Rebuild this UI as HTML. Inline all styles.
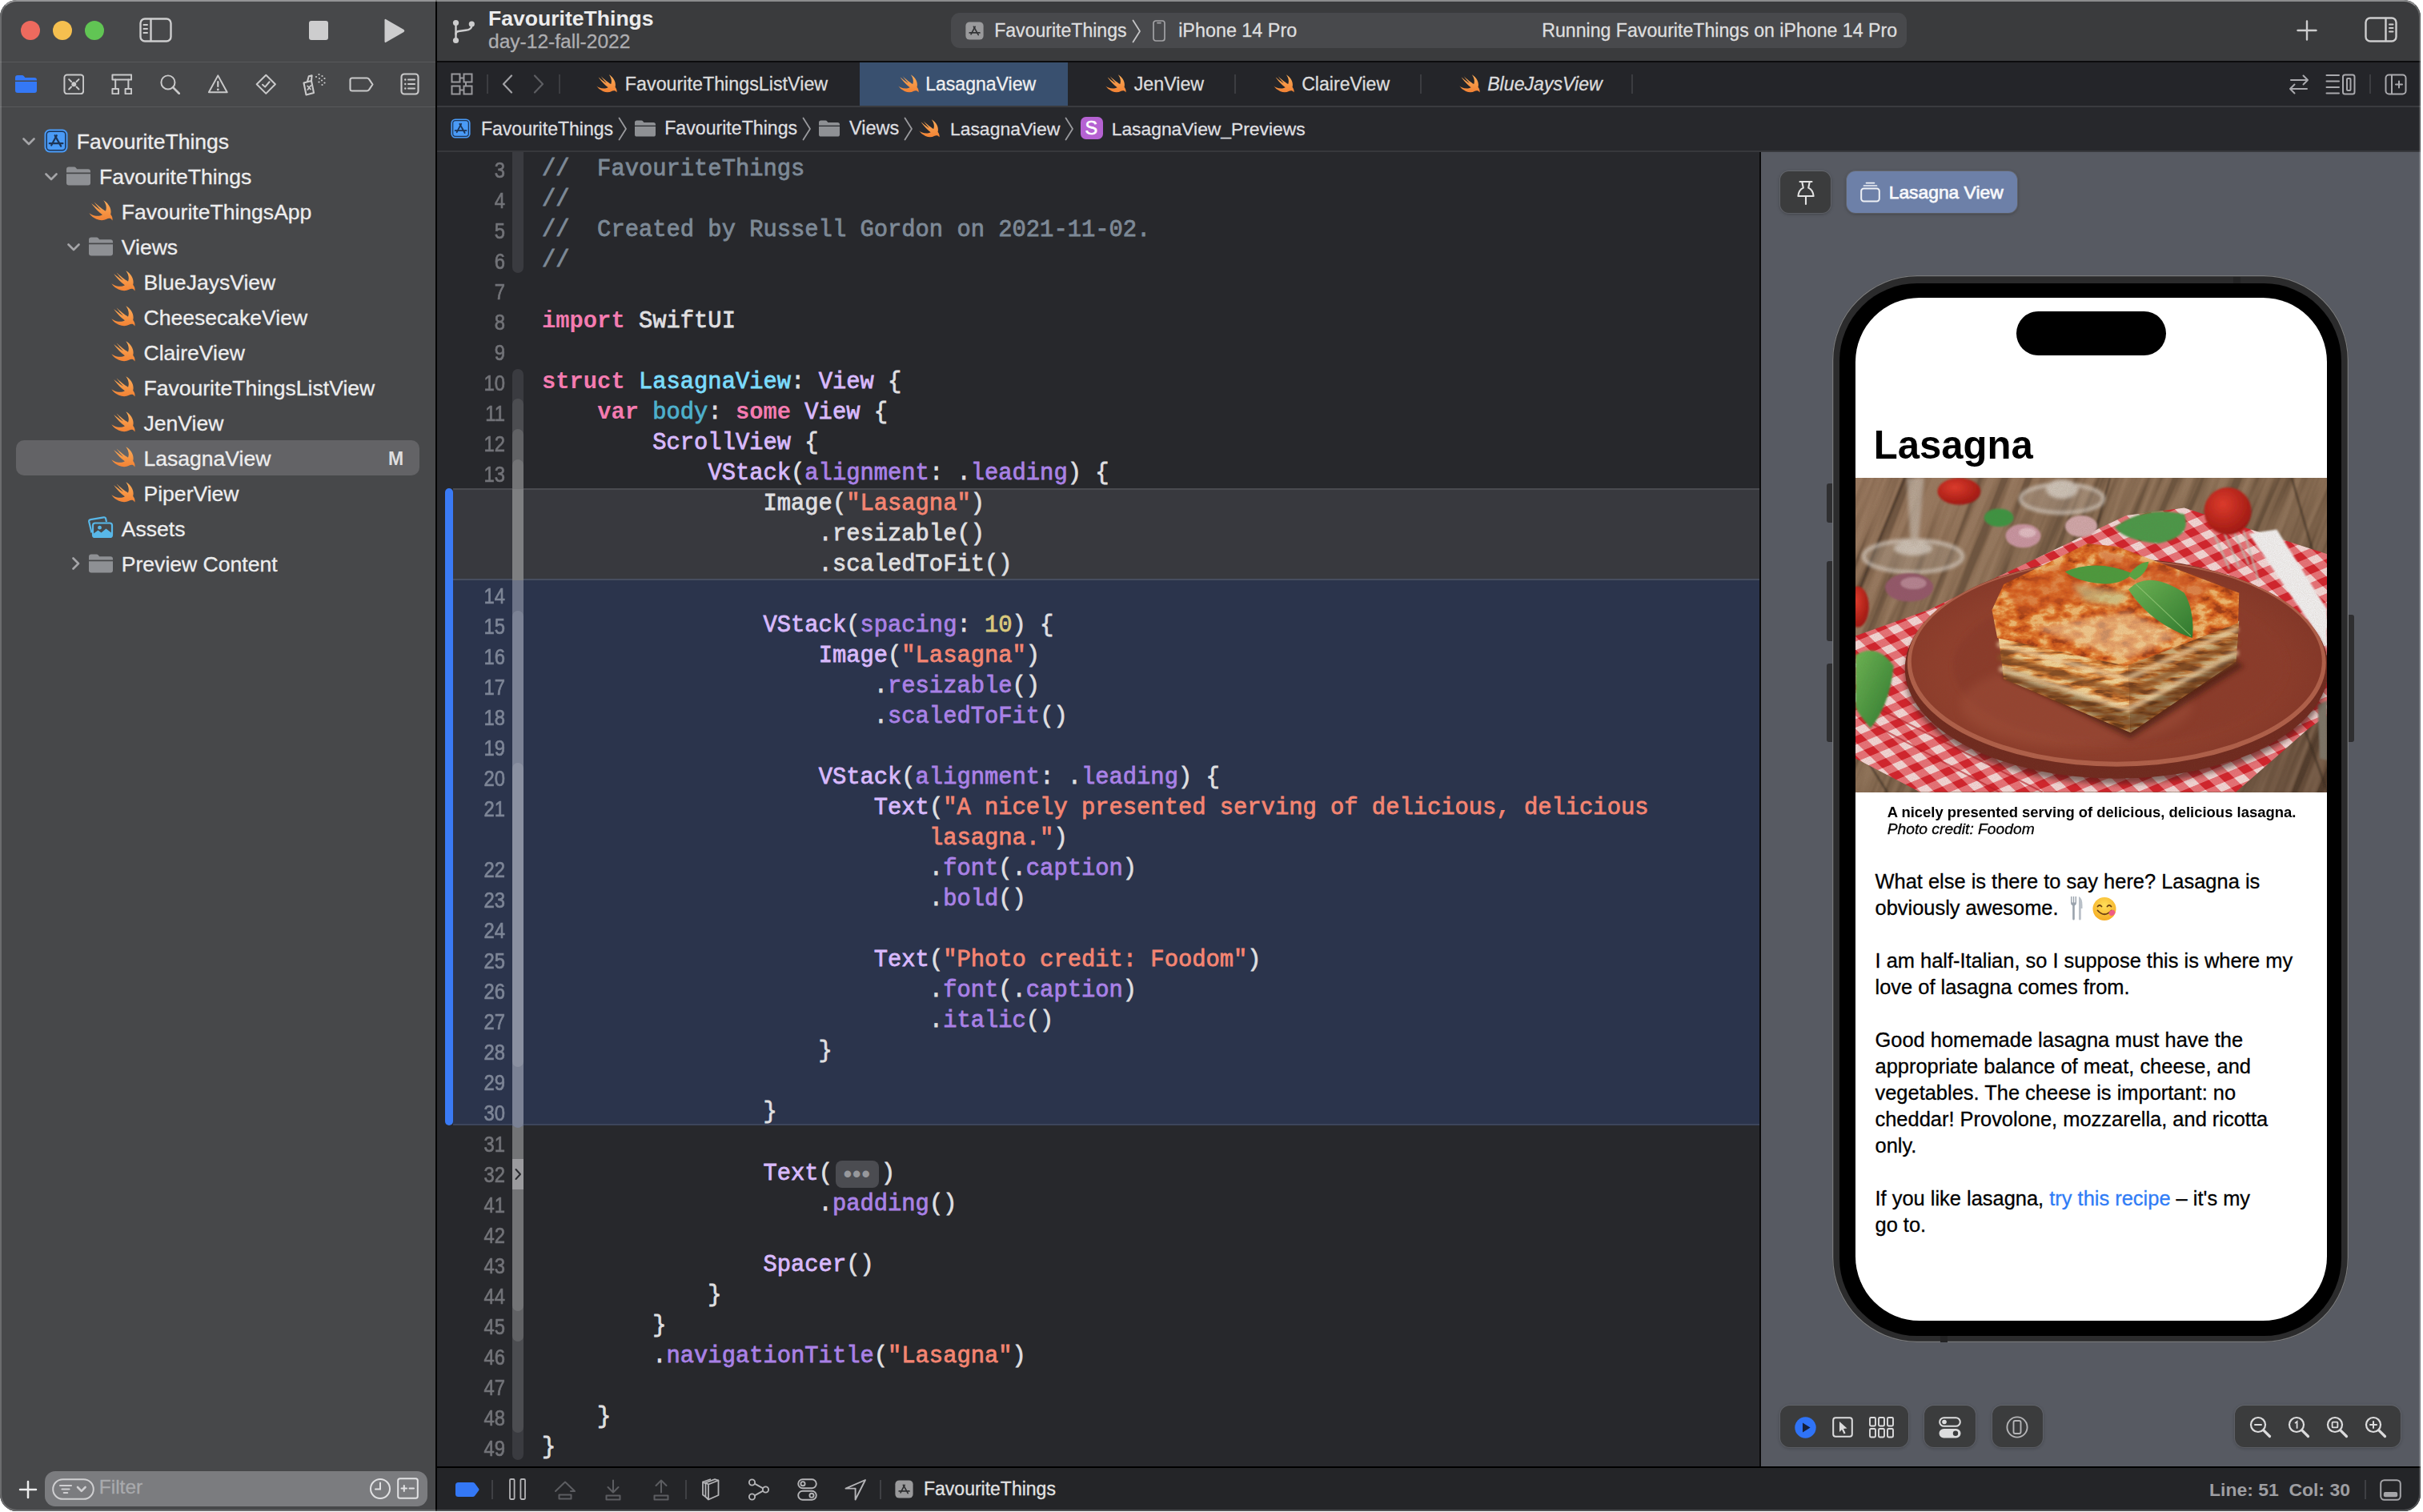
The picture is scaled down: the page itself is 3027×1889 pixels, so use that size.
<!DOCTYPE html>
<html lang="en"><head><meta charset="utf-8"><title>FavouriteThings — LasagnaView.swift</title>
<style>
*{box-sizing:border-box;margin:0;padding:0}
html,body{width:3027px;height:1889px;background:#fff;overflow:hidden}
body{position:relative;font-family:"Liberation Sans",sans-serif;color:#e4e4e5}
.abs{position:absolute}
.t{position:absolute;white-space:nowrap;line-height:1;-webkit-text-stroke:.3px currentColor}
#win{position:absolute;left:0;top:0;width:3024px;height:1888px;border-radius:21px;overflow:hidden;background:#27282c}
#frame{position:absolute;left:0;top:0;width:3024px;height:1888px;border-radius:21px;border:2px solid rgba(255,255,255,.2);border-top-color:rgba(255,255,255,.42);pointer-events:none}
.r{position:absolute}
.code{position:absolute;left:677px;white-space:pre;font-family:"Liberation Mono",monospace;font-size:28.8px;line-height:38px;height:38px;color:#dfdfe0;-webkit-text-stroke:.8px currentColor;letter-spacing:0}
.ln{position:absolute;left:446px;width:185px;text-align:right;font-size:27px;line-height:38px;height:38px;color:#727378;transform:scaleX(.88);transform-origin:100% 50%;-webkit-text-stroke:.7px currentColor}
.kw{color:#f47bb0;font-weight:700;-webkit-text-stroke:0}
.cm{color:#7d8996}
.st{color:#f48572}
.nu{color:#d9c97c}
.td{color:#7bdcfd}
.od{color:#4eb0cc}
.ty{color:#d8b9fc}
.fn{color:#a981e6}
.pill{display:inline-block;vertical-align:top;width:54px;height:34px;margin:2px 3.6px 0 3.6px;border-radius:8px;background:#4b4c51;color:#97989c;font-family:"Liberation Sans",sans-serif;font-size:31px;line-height:33px;text-align:center;letter-spacing:.5px;-webkit-text-stroke:0}
</style></head>
<body>
<svg width="0" height="0" style="position:absolute"><defs><linearGradient id="sg" x1="0" y1="0" x2="0" y2="1"><stop offset="0" stop-color="#fcae5a"/><stop offset="1" stop-color="#f28234"/></linearGradient></defs></svg>
<div id="win">
<div class="r" style="left:0px;top:0px;width:544px;height:1888px;background:#47484a;"></div>
<div class="r" style="left:0px;top:77px;width:544px;height:1px;background:#58595b;"></div>
<div class="r" style="left:0px;top:133px;width:544px;height:1px;background:#58595b;"></div>
<div class="r" style="left:544px;top:0px;width:2px;height:1888px;background:#000;"></div>
<div class="r" style="left:546px;top:0px;width:2478px;height:76px;background:#3a3b3d;"></div>
<div class="r" style="left:546px;top:76px;width:2478px;height:2px;background:#0c0c0d;"></div>
<div class="r" style="left:546px;top:78px;width:2478px;height:54px;background:#242529;"></div>
<div class="r" style="left:546px;top:132px;width:2478px;height:2px;background:#3a3b3f;"></div>
<div class="r" style="left:546px;top:134px;width:2478px;height:54px;background:#27282c;"></div>
<div class="r" style="left:546px;top:188px;width:2478px;height:2px;background:#37383c;"></div>
<div class="r" style="left:546px;top:190px;width:1652px;height:1642px;background:#27282c;"></div>
<div class="r" style="left:2198px;top:190px;width:2px;height:1642px;background:#0a0a0b;"></div>
<div class="r" style="left:2200px;top:190px;width:824px;height:1642px;background:#575a62;"></div>
<div class="r" style="left:546px;top:1832px;width:2478px;height:2px;background:#000;"></div>
<div class="r" style="left:546px;top:1834px;width:2478px;height:54px;background:#242528;"></div>
<div class="r" style="left:25.8px;top:25.7px;width:24.4px;height:24.4px;border-radius:50%;background:#ed6a5e"></div>
<div class="r" style="left:65.8px;top:25.7px;width:24.4px;height:24.4px;border-radius:50%;background:#f5bf4f"></div>
<div class="r" style="left:105.8px;top:25.7px;width:24.4px;height:24.4px;border-radius:50%;background:#61c554"></div>
<svg class="abs" style="left:174px;top:22px" width="41" height="31" viewBox="0 0 41 31" ><g fill="none" stroke="#cdcdce" stroke-width="2.4" stroke-linecap="round"><rect x="1.5" y="1.5" width="38" height="28" rx="5.5"/><path d="M14.5 2V29"/><path d="M5.5 9H10M5.5 14H10M5.5 19H10" stroke-width="2"/></g></svg>
<div class="r" style="left:386px;top:26px;width:24px;height:24px;border-radius:3px;background:#cdcdce"></div>
<svg class="abs" style="left:478px;top:22px" width="30" height="33" viewBox="0 0 30 33" ><path d="M2.5 3.2Q2.5 1.2 4.3 2.2L26.5 15Q28.2 16.5 26.5 18L4.3 30.8Q2.5 31.8 2.5 29.8Z" fill="#cdcdce"/></svg>
<svg class="abs" style="left:563px;top:23px" width="33" height="33" viewBox="0 0 33 33" ><g fill="none" stroke="#cdcdce" stroke-width="2.4" stroke-linecap="round"><path d="M6.5 8V25"/><path d="M6.5 19.5Q6.5 16.5 10 16L19 14.8Q26 14 26.2 9.5"/></g><g fill="#cdcdce"><circle cx="6.5" cy="5.5" r="3.6"/><circle cx="6.5" cy="27.5" r="3.6"/><circle cx="26.3" cy="7" r="3.6"/></g></svg>
<div class="t " style="left:610.0px;top:9.8px;font-size:26.57px;font-weight:700;font-style:normal;color:#ececed;-webkit-text-stroke:0;">FavouriteThings</div>
<div class="t " style="left:610.0px;top:40.0px;font-size:24.55px;font-weight:400;font-style:normal;color:#aeaeb1;">day-12-fall-2022</div>
<div class="r" style="left:1188px;top:16px;width:1194px;height:44px;border-radius:11px;background:#48494c"></div>
<svg class="abs" style="left:1206px;top:27px" width="23" height="23" viewBox="0 0 30 30" ><rect x="0.5" y="0.5" width="29" height="29" rx="6.5" fill="#9a9a9c"/><g stroke="#333436" stroke-width="2.2" stroke-linecap="round" fill="none"><path d="M15.8 8.2L9.2 20.6"/><path d="M13.6 8.2L21.2 21.6"/><path d="M6.8 18.2H18.6"/><path d="M20.6 18.2H23.4"/></g></svg>
<div class="t " style="left:1242.2px;top:26.8px;font-size:23.07px;font-weight:400;font-style:normal;color:#dededf;">FavouriteThings</div>
<svg class="abs" style="left:1414px;top:24px" width="12" height="30" viewBox="0 0 12 30" ><path d="M1.5 1.5L10 15L1.5 28.5" fill="none" stroke="#c4c4c6" stroke-width="1.8" stroke-linecap="round" stroke-linejoin="round"/></svg>
<svg class="abs" style="left:1440px;top:25px" width="16" height="27" viewBox="0 0 16 27" ><g fill="none" stroke="#a2a2a5" stroke-width="1.7"><rect x="1" y="1" width="14" height="25" rx="3"/><path d="M6 3.6H10" stroke-linecap="round"/></g></svg>
<div class="t " style="left:1472.2px;top:26.5px;font-size:23.35px;font-weight:400;font-style:normal;color:#dededf;">iPhone 14 Pro</div>
<div class="t " style="left:1926.2px;top:26.7px;font-size:23.15px;font-weight:400;font-style:normal;color:#dededf;">Running FavouriteThings on iPhone 14 Pro</div>
<svg class="abs" style="left:2869px;top:25px" width="26" height="26" viewBox="0 0 26 26" ><path d="M13 1.5V24.5M1.5 13H24.5" stroke="#cdcdce" stroke-width="2.4" stroke-linecap="round"/></svg>
<svg class="abs" style="left:2954px;top:21px" width="41" height="32" viewBox="0 0 41 32" ><g fill="none" stroke="#cdcdce" stroke-width="2.4" stroke-linecap="round"><rect x="1.5" y="1.5" width="38" height="29" rx="5.5"/><path d="M26.5 2V30"/><path d="M31 9.5H35.5M31 14H35.5M31 18.5H35.5" stroke-width="2"/></g></svg>
<svg class="abs" style="left:563px;top:91px" width="28" height="28" viewBox="0 0 28 28" ><g fill="none" stroke="#98989c" stroke-width="2"><rect x="1.5" y="1.5" width="10" height="10"/><rect x="16.5" y="1.5" width="10" height="10"/><rect x="1.5" y="16.5" width="10" height="10"/><rect x="16.5" y="16.5" width="10" height="10"/><path d="M11.5 6.5H16.5M11.5 21.5H16.5M19 11.5V16.5"/></g></svg>
<div class="r" style="left:608px;top:93px;width:2px;height:24px;background:#3c3d41"></div>
<svg class="abs" style="left:627px;top:93px" width="14" height="24" viewBox="0 0 14 24" ><path d="M12 1.5L2 12L12 22.5" fill="none" stroke="#a2a2a6" stroke-width="2.2" stroke-linecap="round" stroke-linejoin="round"/></svg>
<svg class="abs" style="left:666px;top:93px" width="14" height="24" viewBox="0 0 14 24" ><path d="M2 1.5L12 12L2 22.5" fill="none" stroke="#5d5e62" stroke-width="2.2" stroke-linecap="round" stroke-linejoin="round"/></svg>
<div class="r" style="left:698px;top:93px;width:2px;height:24px;background:#3c3d41"></div>
<div class="r" style="left:1074px;top:78px;width:260px;height:54px;background:#39506f"></div>
<svg class="abs" style="left:745px;top:93px" width="26" height="23" viewBox="2.2 3.2 18.6 16.9" preserveAspectRatio="none"><path d="M13.543 3.41c4.114 2.47 6.545 7.162 5.549 11.131-.024.093-.05.181-.076.272l.002.001c2.062 2.538 1.5 5.258 1.236 4.745-1.072-2.086-3.066-1.568-4.088-1.043a6.803 6.803 0 0 1-.281.158l-.02.012-.002.002c-2.115 1.123-4.957 1.205-7.812-.022a12.568 12.568 0 0 1-5.64-4.838c.649.48 1.35.902 2.097 1.252 3.019 1.414 6.051 1.311 8.197-.002C9.651 12.73 7.101 9.67 5.146 7.191a10.628 10.628 0 0 1-1.005-1.384c2.34 2.142 6.038 4.83 7.365 5.576C8.69 8.408 6.208 4.743 6.324 4.86c4.436 4.47 8.528 6.996 8.528 6.996.154.085.27.154.36.213.085-.215.16-.437.224-.668.708-2.588-.09-5.548-1.893-7.992z" fill="url(#sg)"/></svg>
<div class="t " style="left:780.8px;top:94.2px;font-size:23.3px;font-weight:400;font-style:normal;color:#dcdcdd;">FavouriteThingsListView</div>
<svg class="abs" style="left:1122px;top:93px" width="26" height="23" viewBox="2.2 3.2 18.6 16.9" preserveAspectRatio="none"><path d="M13.543 3.41c4.114 2.47 6.545 7.162 5.549 11.131-.024.093-.05.181-.076.272l.002.001c2.062 2.538 1.5 5.258 1.236 4.745-1.072-2.086-3.066-1.568-4.088-1.043a6.803 6.803 0 0 1-.281.158l-.02.012-.002.002c-2.115 1.123-4.957 1.205-7.812-.022a12.568 12.568 0 0 1-5.64-4.838c.649.48 1.35.902 2.097 1.252 3.019 1.414 6.051 1.311 8.197-.002C9.651 12.73 7.101 9.67 5.146 7.191a10.628 10.628 0 0 1-1.005-1.384c2.34 2.142 6.038 4.83 7.365 5.576C8.69 8.408 6.208 4.743 6.324 4.86c4.436 4.47 8.528 6.996 8.528 6.996.154.085.27.154.36.213.085-.215.16-.437.224-.668.708-2.588-.09-5.548-1.893-7.992z" fill="url(#sg)"/></svg>
<div class="t " style="left:1156.2px;top:94.4px;font-size:23.05px;font-weight:400;font-style:normal;color:#f0f0f1;">LasagnaView</div>
<svg class="abs" style="left:1381px;top:93px" width="26" height="23" viewBox="2.2 3.2 18.6 16.9" preserveAspectRatio="none"><path d="M13.543 3.41c4.114 2.47 6.545 7.162 5.549 11.131-.024.093-.05.181-.076.272l.002.001c2.062 2.538 1.5 5.258 1.236 4.745-1.072-2.086-3.066-1.568-4.088-1.043a6.803 6.803 0 0 1-.281.158l-.02.012-.002.002c-2.115 1.123-4.957 1.205-7.812-.022a12.568 12.568 0 0 1-5.64-4.838c.649.48 1.35.902 2.097 1.252 3.019 1.414 6.051 1.311 8.197-.002C9.651 12.73 7.101 9.67 5.146 7.191a10.628 10.628 0 0 1-1.005-1.384c2.34 2.142 6.038 4.83 7.365 5.576C8.69 8.408 6.208 4.743 6.324 4.86c4.436 4.47 8.528 6.996 8.528 6.996.154.085.27.154.36.213.085-.215.16-.437.224-.668.708-2.588-.09-5.548-1.893-7.992z" fill="url(#sg)"/></svg>
<div class="t " style="left:1416.7px;top:94.2px;font-size:23.26px;font-weight:400;font-style:normal;color:#dcdcdd;">JenView</div>
<div class="r" style="left:1542px;top:93px;width:2px;height:24px;background:#3c3d41"></div>
<svg class="abs" style="left:1591px;top:93px" width="26" height="23" viewBox="2.2 3.2 18.6 16.9" preserveAspectRatio="none"><path d="M13.543 3.41c4.114 2.47 6.545 7.162 5.549 11.131-.024.093-.05.181-.076.272l.002.001c2.062 2.538 1.5 5.258 1.236 4.745-1.072-2.086-3.066-1.568-4.088-1.043a6.803 6.803 0 0 1-.281.158l-.02.012-.002.002c-2.115 1.123-4.957 1.205-7.812-.022a12.568 12.568 0 0 1-5.64-4.838c.649.48 1.35.902 2.097 1.252 3.019 1.414 6.051 1.311 8.197-.002C9.651 12.73 7.101 9.67 5.146 7.191a10.628 10.628 0 0 1-1.005-1.384c2.34 2.142 6.038 4.83 7.365 5.576C8.69 8.408 6.208 4.743 6.324 4.86c4.436 4.47 8.528 6.996 8.528 6.996.154.085.27.154.36.213.085-.215.16-.437.224-.668.708-2.588-.09-5.548-1.893-7.992z" fill="url(#sg)"/></svg>
<div class="t " style="left:1626.2px;top:94.3px;font-size:23.1px;font-weight:400;font-style:normal;color:#dcdcdd;">ClaireView</div>
<div class="r" style="left:1774px;top:93px;width:2px;height:24px;background:#3c3d41"></div>
<svg class="abs" style="left:1823px;top:93px" width="26" height="23" viewBox="2.2 3.2 18.6 16.9" preserveAspectRatio="none"><path d="M13.543 3.41c4.114 2.47 6.545 7.162 5.549 11.131-.024.093-.05.181-.076.272l.002.001c2.062 2.538 1.5 5.258 1.236 4.745-1.072-2.086-3.066-1.568-4.088-1.043a6.803 6.803 0 0 1-.281.158l-.02.012-.002.002c-2.115 1.123-4.957 1.205-7.812-.022a12.568 12.568 0 0 1-5.64-4.838c.649.48 1.35.902 2.097 1.252 3.019 1.414 6.051 1.311 8.197-.002C9.651 12.73 7.101 9.67 5.146 7.191a10.628 10.628 0 0 1-1.005-1.384c2.34 2.142 6.038 4.83 7.365 5.576C8.69 8.408 6.208 4.743 6.324 4.86c4.436 4.47 8.528 6.996 8.528 6.996.154.085.27.154.36.213.085-.215.16-.437.224-.668.708-2.588-.09-5.548-1.893-7.992z" fill="url(#sg)"/></svg>
<div class="t " style="left:1858.2px;top:94.3px;font-size:23.15px;font-weight:400;font-style:italic;color:#dcdcdd;">BlueJaysView</div>
<div class="r" style="left:2038px;top:93px;width:2px;height:24px;background:#3c3d41"></div>
<svg class="abs" style="left:2858px;top:92px" width="28" height="27" viewBox="0 0 28 27" ><g fill="none" stroke="#a9a9ad" stroke-width="2" stroke-linecap="round" stroke-linejoin="round"><path d="M4 8H25M19.5 2.5L25 8L19.5 13.5"/><path d="M24 19H3M8.5 13.5L3 19L8.5 24.5"/></g></svg>
<svg class="abs" style="left:2905px;top:92px" width="38" height="27" viewBox="0 0 38 27" ><g fill="none" stroke="#a9a9ad" stroke-width="2" stroke-linecap="round"><path d="M1.5 2H17M1.5 9.5H17M1.5 17H17M1.5 24.5H17"/><rect x="22" y="1.5" width="14.5" height="24" rx="2.5"/><rect x="27" y="6" width="4.5" height="15" rx="1"/></g></svg>
<div class="r" style="left:2960px;top:93px;width:2px;height:24px;background:#3c3d41"></div>
<svg class="abs" style="left:2979px;top:92px" width="28" height="27" viewBox="0 0 28 27" ><g fill="none" stroke="#a9a9ad" stroke-width="2" stroke-linecap="round"><rect x="1.5" y="1.5" width="25" height="24" rx="4"/><path d="M9 2V25"/><path d="M14 13.5H22M18 9.5V17.5"/></g></svg>
<svg class="abs" style="left:563px;top:148px" width="25" height="25" viewBox="0 0 30 30" ><rect x="0.5" y="0.5" width="29" height="29" rx="6.5" fill="#4a9bf7"/><rect x="3.2" y="3.2" width="23.6" height="23.6" rx="4" fill="none" stroke="#1d3557" stroke-width="1.5"/><g stroke="#1d3557" stroke-width="2.2" stroke-linecap="round" fill="none"><path d="M15.8 8.2L9.2 20.6"/><path d="M13.6 8.2L21.2 21.6"/><path d="M6.8 18.2H18.6"/><path d="M20.6 18.2H23.4"/></g></svg>
<div class="t " style="left:600.9px;top:149.5px;font-size:23.05px;font-weight:400;font-style:normal;color:#dfdfe0;">FavouriteThings</div>
<svg class="abs" style="left:772px;top:146px" width="12" height="30" viewBox="0 0 12 30" ><path d="M1.5 1.5L10 15L1.5 28.5" fill="none" stroke="#9a9a9e" stroke-width="1.8" stroke-linecap="round" stroke-linejoin="round"/></svg>
<svg class="abs" style="left:793px;top:150px" width="26" height="21" viewBox="0 0 30 24" ><path d="M0 3.6Q0 .6 3 .6H9.6Q11 .6 12 1.8L13.2 3.3H27Q30 3.3 30 6.3V7.6H0Z" fill="#8e9094"/><path d="M0 9.2H30V20.6Q30 23.6 27 23.6H3Q0 23.6 0 20.6Z" fill="#8e9094"/></svg>
<div class="t " style="left:830.2px;top:149.4px;font-size:23.15px;font-weight:400;font-style:normal;color:#dfdfe0;">FavouriteThings</div>
<svg class="abs" style="left:1002px;top:146px" width="12" height="30" viewBox="0 0 12 30" ><path d="M1.5 1.5L10 15L1.5 28.5" fill="none" stroke="#9a9a9e" stroke-width="1.8" stroke-linecap="round" stroke-linejoin="round"/></svg>
<svg class="abs" style="left:1023px;top:150px" width="26" height="21" viewBox="0 0 30 24" ><path d="M0 3.6Q0 .6 3 .6H9.6Q11 .6 12 1.8L13.2 3.3H27Q30 3.3 30 6.3V7.6H0Z" fill="#8e9094"/><path d="M0 9.2H30V20.6Q30 23.6 27 23.6H3Q0 23.6 0 20.6Z" fill="#8e9094"/></svg>
<div class="t " style="left:1061.0px;top:149.1px;font-size:23.48px;font-weight:400;font-style:normal;color:#dfdfe0;">Views</div>
<svg class="abs" style="left:1129px;top:146px" width="12" height="30" viewBox="0 0 12 30" ><path d="M1.5 1.5L10 15L1.5 28.5" fill="none" stroke="#9a9a9e" stroke-width="1.8" stroke-linecap="round" stroke-linejoin="round"/></svg>
<svg class="abs" style="left:1148px;top:149px" width="26" height="23" viewBox="2.2 3.2 18.6 16.9" preserveAspectRatio="none"><path d="M13.543 3.41c4.114 2.47 6.545 7.162 5.549 11.131-.024.093-.05.181-.076.272l.002.001c2.062 2.538 1.5 5.258 1.236 4.745-1.072-2.086-3.066-1.568-4.088-1.043a6.803 6.803 0 0 1-.281.158l-.02.012-.002.002c-2.115 1.123-4.957 1.205-7.812-.022a12.568 12.568 0 0 1-5.64-4.838c.649.48 1.35.902 2.097 1.252 3.019 1.414 6.051 1.311 8.197-.002C9.651 12.73 7.101 9.67 5.146 7.191a10.628 10.628 0 0 1-1.005-1.384c2.34 2.142 6.038 4.83 7.365 5.576C8.69 8.408 6.208 4.743 6.324 4.86c4.436 4.47 8.528 6.996 8.528 6.996.154.085.27.154.36.213.085-.215.16-.437.224-.668.708-2.588-.09-5.548-1.893-7.992z" fill="url(#sg)"/></svg>
<div class="t " style="left:1186.9px;top:149.6px;font-size:22.94px;font-weight:400;font-style:normal;color:#dfdfe0;">LasagnaView</div>
<svg class="abs" style="left:1330px;top:146px" width="12" height="30" viewBox="0 0 12 30" ><path d="M1.5 1.5L10 15L1.5 28.5" fill="none" stroke="#9a9a9e" stroke-width="1.8" stroke-linecap="round" stroke-linejoin="round"/></svg>
<div class="r" style="left:1350px;top:146px;width:28px;height:28px;border-radius:6.5px;background:#b562d2"></div>
<div class="t " style="left:1355.5px;top:148.7px;font-size:23.5px;font-weight:400;font-style:normal;color:#fff;-webkit-text-stroke:.6px #fff;">S</div>
<div class="t " style="left:1388.7px;top:149.7px;font-size:22.84px;font-weight:400;font-style:normal;color:#dfdfe0;">LasagnaView_Previews</div>
<svg class="abs" style="left:19px;top:94px" width="27" height="22" viewBox="0 0 27 22" ><path d="M0 3Q0 0 3 0H8.5Q10 0 11 1.2L12.4 3H24Q27 3 27 6V6.6H0Z" fill="#3478f6"/><path d="M0 8H27V19Q27 22 24 22H3Q0 22 0 19Z" fill="#3478f6"/></svg>
<svg class="abs" style="left:78.7px;top:91.7px" width="26.6" height="26.6" viewBox="0 0 28 28" ><g fill="none" stroke="#c9c9ca" stroke-width="2.1" stroke-linecap="round" stroke-linejoin="round"><rect x="1.5" y="1.5" width="25" height="25" rx="3.5"/><path d="M7.5 7.5L10.6 10.6M20.5 7.5L17.4 10.6M7.5 20.5L10.6 17.4M20.5 20.5L17.4 17.4"/></g><circle cx="14" cy="14" r="3.1" fill="#c9c9ca"/></svg>
<svg class="abs" style="left:138.7px;top:91.7px" width="26.6" height="26.6" viewBox="0 0 28 28" ><g fill="none" stroke="#c9c9ca" stroke-width="2.1" stroke-linecap="round" stroke-linejoin="round"><rect x="1.5" y="1.5" width="25" height="6.5"/><rect x="1.5" y="20" width="8" height="6.5"/><rect x="18.5" y="20" width="8" height="6.5"/><path d="M5.5 8V20M22.5 8V20"/></g></svg>
<svg class="abs" style="left:198.7px;top:91.7px" width="26.6" height="26.6" viewBox="0 0 28 28" ><g fill="none" stroke="#c9c9ca" stroke-width="2.1" stroke-linecap="round" stroke-linejoin="round"><circle cx="11.5" cy="11.5" r="9"/><path d="M18 18L26 26" stroke-width="2.8"/></g></svg>
<svg class="abs" style="left:258.7px;top:91.7px" width="26.6" height="26.6" viewBox="0 0 28 28" ><g fill="none" stroke="#c9c9ca" stroke-width="2.1" stroke-linecap="round" stroke-linejoin="round"><path d="M14 2.5L26 24.5H2Z"/></g><rect x="12.8" y="9.5" width="2.4" height="8.5" rx="1.2" fill="#c9c9ca"/><circle cx="14" cy="21" r="1.5" fill="#c9c9ca"/></svg>
<svg class="abs" style="left:318.7px;top:91.7px" width="26.6" height="26.6" viewBox="0 0 28 28" ><g fill="none" stroke="#c9c9ca" stroke-width="2.1" stroke-linecap="round" stroke-linejoin="round"><path d="M14 1.8L26.2 14L14 26.2L1.8 14Z" /><path d="M9.5 14.5L12.8 17.5L18.5 10.8"/></g></svg>
<svg class="abs" style="left:376px;top:90px" width="32" height="30" viewBox="0 0 32 30" ><g fill="none" stroke="#c9c9ca" stroke-width="2.1" stroke-linecap="round" stroke-linejoin="round"><path d="M3.5 13.5L13 11L16 26L6.5 28.5Z"/><path d="M8 12L9.8 5.2L13.6 4.2L13 10.8"/><path d="M8.2 17.5L12 21.5M12.2 17L8.4 22" stroke-width="1.8"/></g><g fill="#c9c9ca"><circle cx="19" cy="6" r="1.1"/><circle cx="22.5" cy="3" r="1.1"/><circle cx="23" cy="8" r="1.1"/><circle cx="26.5" cy="5" r="1.1"/><circle cx="26" cy="10.5" r="1.1"/><circle cx="29.5" cy="8" r="1.1"/><circle cx="29.5" cy="13.5" r="1.1"/><circle cx="26.5" cy="16" r="1.1"/><circle cx="22.5" cy="12.5" r="1.1"/></g></svg>
<svg class="abs" style="left:436px;top:96px" width="31" height="19" viewBox="0 0 31 19" ><g fill="none" stroke="#c9c9ca" stroke-width="2.1" stroke-linecap="round" stroke-linejoin="round"><path d="M4 1.5H22.5Q24 1.5 25 2.8L29.5 9.5L25 16.2Q24 17.5 22.5 17.5H4Q1.5 17.5 1.5 15V4Q1.5 1.5 4 1.5Z"/></g></svg>
<svg class="abs" style="left:500px;top:91px" width="24" height="28" viewBox="0 0 24 28" ><g fill="none" stroke="#c9c9ca" stroke-width="2.1" stroke-linecap="round" stroke-linejoin="round"><rect x="1.5" y="1.5" width="21" height="25" rx="3.5"/><path d="M10 8.5H18M10 14H18M10 19.5H18"/></g><g fill="#c9c9ca"><circle cx="6.3" cy="8.5" r="1.2"/><circle cx="6.3" cy="14" r="1.2"/><circle cx="6.3" cy="19.5" r="1.2"/></g></svg>
<div class="r" style="left:20px;top:550px;width:504px;height:44px;border-radius:10px;background:#636366"></div>
<svg class="abs" style="left:28px;top:172px" width="16" height="10" viewBox="0 0 16 10" ><path d="M1.5 1.5L8 8L14.5 1.5" fill="none" stroke="#a5a5a8" stroke-width="2.6" stroke-linecap="round" stroke-linejoin="round"/></svg>
<svg class="abs" style="left:55px;top:161px" width="30" height="30" viewBox="0 0 30 30" ><rect x="0.5" y="0.5" width="29" height="29" rx="6.5" fill="#4a9bf7"/><rect x="3.2" y="3.2" width="23.6" height="23.6" rx="4" fill="none" stroke="#1d3557" stroke-width="1.5"/><g stroke="#1d3557" stroke-width="2.2" stroke-linecap="round" fill="none"><path d="M15.8 8.2L9.2 20.6"/><path d="M13.6 8.2L21.2 21.6"/><path d="M6.8 18.2H18.6"/><path d="M20.6 18.2H23.4"/></g></svg>
<div class="t " style="left:95.8px;top:163.5px;font-size:26.56px;font-weight:400;font-style:normal;color:#ededee;">FavouriteThings</div>
<svg class="abs" style="left:56px;top:216px" width="16" height="10" viewBox="0 0 16 10" ><path d="M1.5 1.5L8 8L14.5 1.5" fill="none" stroke="#a5a5a8" stroke-width="2.6" stroke-linecap="round" stroke-linejoin="round"/></svg>
<svg class="abs" style="left:83px;top:208px" width="30" height="24" viewBox="0 0 30 24" ><path d="M0 3.6Q0 .6 3 .6H9.6Q11 .6 12 1.8L13.2 3.3H27Q30 3.3 30 6.3V7.6H0Z" fill="#8e9094"/><path d="M0 9.2H30V20.6Q30 23.6 27 23.6H3Q0 23.6 0 20.6Z" fill="#8e9094"/></svg>
<div class="t " style="left:124.0px;top:207.5px;font-size:26.56px;font-weight:400;font-style:normal;color:#ededee;">FavouriteThings</div>
<svg class="abs" style="left:111px;top:250px" width="30" height="26" viewBox="2.2 3.2 18.6 16.9" preserveAspectRatio="none"><path d="M13.543 3.41c4.114 2.47 6.545 7.162 5.549 11.131-.024.093-.05.181-.076.272l.002.001c2.062 2.538 1.5 5.258 1.236 4.745-1.072-2.086-3.066-1.568-4.088-1.043a6.803 6.803 0 0 1-.281.158l-.02.012-.002.002c-2.115 1.123-4.957 1.205-7.812-.022a12.568 12.568 0 0 1-5.64-4.838c.649.48 1.35.902 2.097 1.252 3.019 1.414 6.051 1.311 8.197-.002C9.651 12.73 7.101 9.67 5.146 7.191a10.628 10.628 0 0 1-1.005-1.384c2.34 2.142 6.038 4.83 7.365 5.576C8.69 8.408 6.208 4.743 6.324 4.86c4.436 4.47 8.528 6.996 8.528 6.996.154.085.27.154.36.213.085-.215.16-.437.224-.668.708-2.588-.09-5.548-1.893-7.992z" fill="url(#sg)"/></svg>
<div class="t " style="left:151.8px;top:251.5px;font-size:26.56px;font-weight:400;font-style:normal;color:#ededee;">FavouriteThingsApp</div>
<svg class="abs" style="left:84px;top:304px" width="16" height="10" viewBox="0 0 16 10" ><path d="M1.5 1.5L8 8L14.5 1.5" fill="none" stroke="#a5a5a8" stroke-width="2.6" stroke-linecap="round" stroke-linejoin="round"/></svg>
<svg class="abs" style="left:111px;top:296px" width="30" height="24" viewBox="0 0 30 24" ><path d="M0 3.6Q0 .6 3 .6H9.6Q11 .6 12 1.8L13.2 3.3H27Q30 3.3 30 6.3V7.6H0Z" fill="#8e9094"/><path d="M0 9.2H30V20.6Q30 23.6 27 23.6H3Q0 23.6 0 20.6Z" fill="#8e9094"/></svg>
<div class="t " style="left:151.8px;top:295.5px;font-size:26.56px;font-weight:400;font-style:normal;color:#ededee;">Views</div>
<svg class="abs" style="left:139px;top:338px" width="30" height="26" viewBox="2.2 3.2 18.6 16.9" preserveAspectRatio="none"><path d="M13.543 3.41c4.114 2.47 6.545 7.162 5.549 11.131-.024.093-.05.181-.076.272l.002.001c2.062 2.538 1.5 5.258 1.236 4.745-1.072-2.086-3.066-1.568-4.088-1.043a6.803 6.803 0 0 1-.281.158l-.02.012-.002.002c-2.115 1.123-4.957 1.205-7.812-.022a12.568 12.568 0 0 1-5.64-4.838c.649.48 1.35.902 2.097 1.252 3.019 1.414 6.051 1.311 8.197-.002C9.651 12.73 7.101 9.67 5.146 7.191a10.628 10.628 0 0 1-1.005-1.384c2.34 2.142 6.038 4.83 7.365 5.576C8.69 8.408 6.208 4.743 6.324 4.86c4.436 4.47 8.528 6.996 8.528 6.996.154.085.27.154.36.213.085-.215.16-.437.224-.668.708-2.588-.09-5.548-1.893-7.992z" fill="url(#sg)"/></svg>
<div class="t " style="left:179.5px;top:339.5px;font-size:26.56px;font-weight:400;font-style:normal;color:#ededee;">BlueJaysView</div>
<svg class="abs" style="left:139px;top:382px" width="30" height="26" viewBox="2.2 3.2 18.6 16.9" preserveAspectRatio="none"><path d="M13.543 3.41c4.114 2.47 6.545 7.162 5.549 11.131-.024.093-.05.181-.076.272l.002.001c2.062 2.538 1.5 5.258 1.236 4.745-1.072-2.086-3.066-1.568-4.088-1.043a6.803 6.803 0 0 1-.281.158l-.02.012-.002.002c-2.115 1.123-4.957 1.205-7.812-.022a12.568 12.568 0 0 1-5.64-4.838c.649.48 1.35.902 2.097 1.252 3.019 1.414 6.051 1.311 8.197-.002C9.651 12.73 7.101 9.67 5.146 7.191a10.628 10.628 0 0 1-1.005-1.384c2.34 2.142 6.038 4.83 7.365 5.576C8.69 8.408 6.208 4.743 6.324 4.86c4.436 4.47 8.528 6.996 8.528 6.996.154.085.27.154.36.213.085-.215.16-.437.224-.668.708-2.588-.09-5.548-1.893-7.992z" fill="url(#sg)"/></svg>
<div class="t " style="left:179.5px;top:383.5px;font-size:26.56px;font-weight:400;font-style:normal;color:#ededee;">CheesecakeView</div>
<svg class="abs" style="left:139px;top:426px" width="30" height="26" viewBox="2.2 3.2 18.6 16.9" preserveAspectRatio="none"><path d="M13.543 3.41c4.114 2.47 6.545 7.162 5.549 11.131-.024.093-.05.181-.076.272l.002.001c2.062 2.538 1.5 5.258 1.236 4.745-1.072-2.086-3.066-1.568-4.088-1.043a6.803 6.803 0 0 1-.281.158l-.02.012-.002.002c-2.115 1.123-4.957 1.205-7.812-.022a12.568 12.568 0 0 1-5.64-4.838c.649.48 1.35.902 2.097 1.252 3.019 1.414 6.051 1.311 8.197-.002C9.651 12.73 7.101 9.67 5.146 7.191a10.628 10.628 0 0 1-1.005-1.384c2.34 2.142 6.038 4.83 7.365 5.576C8.69 8.408 6.208 4.743 6.324 4.86c4.436 4.47 8.528 6.996 8.528 6.996.154.085.27.154.36.213.085-.215.16-.437.224-.668.708-2.588-.09-5.548-1.893-7.992z" fill="url(#sg)"/></svg>
<div class="t " style="left:179.5px;top:427.5px;font-size:26.56px;font-weight:400;font-style:normal;color:#ededee;">ClaireView</div>
<svg class="abs" style="left:139px;top:470px" width="30" height="26" viewBox="2.2 3.2 18.6 16.9" preserveAspectRatio="none"><path d="M13.543 3.41c4.114 2.47 6.545 7.162 5.549 11.131-.024.093-.05.181-.076.272l.002.001c2.062 2.538 1.5 5.258 1.236 4.745-1.072-2.086-3.066-1.568-4.088-1.043a6.803 6.803 0 0 1-.281.158l-.02.012-.002.002c-2.115 1.123-4.957 1.205-7.812-.022a12.568 12.568 0 0 1-5.64-4.838c.649.48 1.35.902 2.097 1.252 3.019 1.414 6.051 1.311 8.197-.002C9.651 12.73 7.101 9.67 5.146 7.191a10.628 10.628 0 0 1-1.005-1.384c2.34 2.142 6.038 4.83 7.365 5.576C8.69 8.408 6.208 4.743 6.324 4.86c4.436 4.47 8.528 6.996 8.528 6.996.154.085.27.154.36.213.085-.215.16-.437.224-.668.708-2.588-.09-5.548-1.893-7.992z" fill="url(#sg)"/></svg>
<div class="t " style="left:179.5px;top:471.5px;font-size:26.56px;font-weight:400;font-style:normal;color:#ededee;">FavouriteThingsListView</div>
<svg class="abs" style="left:139px;top:514px" width="30" height="26" viewBox="2.2 3.2 18.6 16.9" preserveAspectRatio="none"><path d="M13.543 3.41c4.114 2.47 6.545 7.162 5.549 11.131-.024.093-.05.181-.076.272l.002.001c2.062 2.538 1.5 5.258 1.236 4.745-1.072-2.086-3.066-1.568-4.088-1.043a6.803 6.803 0 0 1-.281.158l-.02.012-.002.002c-2.115 1.123-4.957 1.205-7.812-.022a12.568 12.568 0 0 1-5.64-4.838c.649.48 1.35.902 2.097 1.252 3.019 1.414 6.051 1.311 8.197-.002C9.651 12.73 7.101 9.67 5.146 7.191a10.628 10.628 0 0 1-1.005-1.384c2.34 2.142 6.038 4.83 7.365 5.576C8.69 8.408 6.208 4.743 6.324 4.86c4.436 4.47 8.528 6.996 8.528 6.996.154.085.27.154.36.213.085-.215.16-.437.224-.668.708-2.588-.09-5.548-1.893-7.992z" fill="url(#sg)"/></svg>
<div class="t " style="left:179.5px;top:515.5px;font-size:26.56px;font-weight:400;font-style:normal;color:#ededee;">JenView</div>
<svg class="abs" style="left:139px;top:558px" width="30" height="26" viewBox="2.2 3.2 18.6 16.9" preserveAspectRatio="none"><path d="M13.543 3.41c4.114 2.47 6.545 7.162 5.549 11.131-.024.093-.05.181-.076.272l.002.001c2.062 2.538 1.5 5.258 1.236 4.745-1.072-2.086-3.066-1.568-4.088-1.043a6.803 6.803 0 0 1-.281.158l-.02.012-.002.002c-2.115 1.123-4.957 1.205-7.812-.022a12.568 12.568 0 0 1-5.64-4.838c.649.48 1.35.902 2.097 1.252 3.019 1.414 6.051 1.311 8.197-.002C9.651 12.73 7.101 9.67 5.146 7.191a10.628 10.628 0 0 1-1.005-1.384c2.34 2.142 6.038 4.83 7.365 5.576C8.69 8.408 6.208 4.743 6.324 4.86c4.436 4.47 8.528 6.996 8.528 6.996.154.085.27.154.36.213.085-.215.16-.437.224-.668.708-2.588-.09-5.548-1.893-7.992z" fill="url(#sg)"/></svg>
<div class="t " style="left:179.5px;top:559.5px;font-size:26.56px;font-weight:400;font-style:normal;color:#ededee;">LasagnaView</div>
<svg class="abs" style="left:139px;top:602px" width="30" height="26" viewBox="2.2 3.2 18.6 16.9" preserveAspectRatio="none"><path d="M13.543 3.41c4.114 2.47 6.545 7.162 5.549 11.131-.024.093-.05.181-.076.272l.002.001c2.062 2.538 1.5 5.258 1.236 4.745-1.072-2.086-3.066-1.568-4.088-1.043a6.803 6.803 0 0 1-.281.158l-.02.012-.002.002c-2.115 1.123-4.957 1.205-7.812-.022a12.568 12.568 0 0 1-5.64-4.838c.649.48 1.35.902 2.097 1.252 3.019 1.414 6.051 1.311 8.197-.002C9.651 12.73 7.101 9.67 5.146 7.191a10.628 10.628 0 0 1-1.005-1.384c2.34 2.142 6.038 4.83 7.365 5.576C8.69 8.408 6.208 4.743 6.324 4.86c4.436 4.47 8.528 6.996 8.528 6.996.154.085.27.154.36.213.085-.215.16-.437.224-.668.708-2.588-.09-5.548-1.893-7.992z" fill="url(#sg)"/></svg>
<div class="t " style="left:179.5px;top:603.5px;font-size:26.56px;font-weight:400;font-style:normal;color:#ededee;">PiperView</div>
<svg class="abs" style="left:109px;top:645px" width="33" height="28" viewBox="0 0 33 28" ><g fill="none" stroke="#58b7e8" stroke-width="2.2" stroke-linejoin="round"><path d="M5.5 20.5L2.2 6.8Q1.8 4.6 4 4.1L20.5 1.3Q22.7 1 23.2 3.2L24 7"/><rect x="7" y="8.5" width="24" height="17.5" rx="2.8"/></g><circle cx="15.5" cy="14.2" r="2.4" fill="#58b7e8"/><path d="M8 25V21.5L13.5 17.5L17.5 20.5L23.5 15.5L30 20.5V25Z" fill="#58b7e8"/></svg>
<div class="t " style="left:151.8px;top:647.5px;font-size:26.56px;font-weight:400;font-style:normal;color:#ededee;">Assets</div>
<svg class="abs" style="left:90px;top:696px" width="10" height="16" viewBox="0 0 10 16" ><path d="M1.5 1.5L8 8L1.5 14.5" fill="none" stroke="#a5a5a8" stroke-width="2.6" stroke-linecap="round" stroke-linejoin="round"/></svg>
<svg class="abs" style="left:111px;top:692px" width="30" height="24" viewBox="0 0 30 24" ><path d="M0 3.6Q0 .6 3 .6H9.6Q11 .6 12 1.8L13.2 3.3H27Q30 3.3 30 6.3V7.6H0Z" fill="#8e9094"/><path d="M0 9.2H30V20.6Q30 23.6 27 23.6H3Q0 23.6 0 20.6Z" fill="#8e9094"/></svg>
<div class="t " style="left:151.8px;top:691.5px;font-size:26.56px;font-weight:400;font-style:normal;color:#ededee;">Preview Content</div>
<div class="t " style="left:485.0px;top:561.5px;font-size:23px;font-weight:700;font-style:normal;color:#dededf;-webkit-text-stroke:0;">M</div>
<svg class="abs" style="left:23px;top:1849px" width="24" height="24" viewBox="0 0 24 24" ><path d="M12 2V22M2 12H22" stroke="#ececed" stroke-width="2.5" stroke-linecap="round"/></svg>
<div class="r" style="left:56px;top:1838px;width:478px;height:44px;border-radius:13px;background:#7b7c7f"></div>
<svg class="abs" style="left:65px;top:1847px" width="53" height="27" viewBox="0 0 53 27" ><g fill="none" stroke="#cfcfd1" stroke-linecap="round" stroke-linejoin="round"><rect x="1.2" y="1.2" width="50.6" height="24.6" rx="12.3" stroke-width="2"/><path d="M10 9H24M12.5 13.5H21.5M14.8 18H19.2" stroke-width="2.2"/><path d="M32 11L36.8 15.8L41.6 11" stroke-width="2.6"/></g></svg>
<div class="t " style="left:123.8px;top:1846.3px;font-size:24.48px;font-weight:400;font-style:normal;color:#a9aaad;">Filter</div>
<svg class="abs" style="left:461px;top:1846px" width="28" height="28" viewBox="0 0 28 28" ><g fill="none" stroke="#e1e1e3" stroke-width="2" stroke-linecap="round"><circle cx="14" cy="14" r="12"/><path d="M14 6.5V14.5H8"/></g></svg>
<svg class="abs" style="left:496px;top:1846px" width="27" height="27" viewBox="0 0 27 27" ><g fill="none" stroke="#e1e1e3" stroke-width="2" stroke-linecap="round"><rect x="1.2" y="1.2" width="24.6" height="24.6" rx="2.5"/><path d="M5.5 13.5H12M8.8 10V17M15.5 13.5H21"/></g></svg>
<div class="r" style="left:566px;top:610px;width:1632px;height:114px;background:#38393e;"></div>
<div class="r" style="left:566px;top:610px;width:1632px;height:2px;background:#4a4b50;"></div>
<div class="r" style="left:566px;top:724px;width:1632px;height:682px;background:#2b344c;"></div>
<div class="r" style="left:566px;top:723px;width:1632px;height:2px;background:#474e5f;"></div>
<div class="r" style="left:566px;top:1404px;width:1632px;height:2px;background:#3d465c;"></div>
<div class="r" style="left:556px;top:610px;width:10px;height:796px;background:#3a7af5;border-radius:5px"></div>
<div class="r" style="left:640px;top:190px;width:14px;height:151px;background:#3a3b40;border-radius:0 0 7px 7px"></div>
<div class="r" style="left:640px;top:461px;width:14px;height:1363px;background:#3a3b40;border-radius:7px"></div>
<div class="r" style="left:640px;top:498px;width:14px;height:1292px;background:#4c4d51;border-radius:7px"></div>
<div class="r" style="left:640px;top:536px;width:14px;height:1140px;background:#616265;border-radius:7px"></div>
<div class="r" style="left:640px;top:574px;width:14px;height:1064px;background:#737476;border-radius:7px"></div>
<div class="r" style="left:640px;top:611px;width:14px;height:114px;background:#7e7f81;"></div>
<div class="r" style="left:640px;top:725px;width:14px;height:682px;background:#6c7387;"></div>
<div class="r" style="left:640px;top:763px;width:14px;height:646px;background:#7b8295;border-radius:7px"></div>
<div class="r" style="left:640px;top:953px;width:14px;height:380px;background:#8a90a1;border-radius:7px"></div>
<div class="r" style="left:640px;top:1448px;width:14px;height:38px;background:#9b9b9e;"></div>
<svg class="abs" style="left:643px;top:1459px" width="9" height="16" viewBox="0 0 9 16" ><path d="M1.5 2L7 8L1.5 14" fill="none" stroke="#2a2b2f" stroke-width="2" stroke-linecap="round" stroke-linejoin="round"/></svg>
<div class="ln" style="top:194.2px;color:#727378">3</div>
<div class="code" style="top:193px"><span class="cm">//  FavouriteThings</span></div>
<div class="ln" style="top:232.2px;color:#727378">4</div>
<div class="code" style="top:231px"><span class="cm">//</span></div>
<div class="ln" style="top:270.2px;color:#727378">5</div>
<div class="code" style="top:269px"><span class="cm">//  Created by Russell Gordon on 2021-11-02.</span></div>
<div class="ln" style="top:308.2px;color:#727378">6</div>
<div class="code" style="top:307px"><span class="cm">//</span></div>
<div class="ln" style="top:346.2px;color:#727378">7</div>
<div class="ln" style="top:384.2px;color:#727378">8</div>
<div class="code" style="top:383px"><span class="kw">import</span> SwiftUI</div>
<div class="ln" style="top:422.2px;color:#727378">9</div>
<div class="ln" style="top:460.2px;color:#727378">10</div>
<div class="code" style="top:459px"><span class="kw">struct</span> <span class="td">LasagnaView</span>: <span class="ty">View</span> {</div>
<div class="ln" style="top:498.2px;color:#727378">11</div>
<div class="code" style="top:497px">    <span class="kw">var</span> <span class="od">body</span>: <span class="kw">some</span> <span class="ty">View</span> {</div>
<div class="ln" style="top:536.2px;color:#727378">12</div>
<div class="code" style="top:535px">        <span class="ty">ScrollView</span> {</div>
<div class="ln" style="top:574.2px;color:#727378">13</div>
<div class="code" style="top:573px">            <span class="ty">VStack</span>(<span class="fn">alignment</span>: .<span class="fn">leading</span>) {</div>
<div class="code" style="top:611px">                Image(<span class="st">"Lasagna"</span>)</div>
<div class="code" style="top:649px">                    .resizable()</div>
<div class="code" style="top:687px">                    .scaledToFit()</div>
<div class="ln" style="top:726.2px;color:#7d8596">14</div>
<div class="ln" style="top:764.2px;color:#7d8596">15</div>
<div class="code" style="top:763px">                <span class="ty">VStack</span>(<span class="fn">spacing</span>: <span class="nu">10</span>) {</div>
<div class="ln" style="top:802.2px;color:#7d8596">16</div>
<div class="code" style="top:801px">                    <span class="ty">Image</span>(<span class="st">"Lasagna"</span>)</div>
<div class="ln" style="top:840.2px;color:#7d8596">17</div>
<div class="code" style="top:839px">                        .<span class="fn">resizable</span>()</div>
<div class="ln" style="top:878.2px;color:#7d8596">18</div>
<div class="code" style="top:877px">                        .<span class="fn">scaledToFit</span>()</div>
<div class="ln" style="top:916.2px;color:#7d8596">19</div>
<div class="ln" style="top:954.2px;color:#7d8596">20</div>
<div class="code" style="top:953px">                    <span class="ty">VStack</span>(<span class="fn">alignment</span>: .<span class="fn">leading</span>) {</div>
<div class="ln" style="top:992.2px;color:#7d8596">21</div>
<div class="code" style="top:991px">                        <span class="ty">Text</span>(<span class="st">"A nicely presented serving of delicious, delicious</span></div>
<div class="code" style="top:1029px">                            <span class="st">lasagna."</span>)</div>
<div class="ln" style="top:1068.2px;color:#7d8596">22</div>
<div class="code" style="top:1067px">                            .<span class="fn">font</span>(.<span class="fn">caption</span>)</div>
<div class="ln" style="top:1106.2px;color:#7d8596">23</div>
<div class="code" style="top:1105px">                            .<span class="fn">bold</span>()</div>
<div class="ln" style="top:1144.2px;color:#7d8596">24</div>
<div class="ln" style="top:1182.2px;color:#7d8596">25</div>
<div class="code" style="top:1181px">                        <span class="ty">Text</span>(<span class="st">"Photo credit: Foodom"</span>)</div>
<div class="ln" style="top:1220.2px;color:#7d8596">26</div>
<div class="code" style="top:1219px">                            .<span class="fn">font</span>(.<span class="fn">caption</span>)</div>
<div class="ln" style="top:1258.2px;color:#7d8596">27</div>
<div class="code" style="top:1257px">                            .<span class="fn">italic</span>()</div>
<div class="ln" style="top:1296.2px;color:#7d8596">28</div>
<div class="code" style="top:1295px">                    }</div>
<div class="ln" style="top:1334.2px;color:#7d8596">29</div>
<div class="ln" style="top:1372.2px;color:#7d8596">30</div>
<div class="code" style="top:1371px">                }</div>
<div class="ln" style="top:1411.2px;color:#727378">31</div>
<div class="ln" style="top:1449.2px;color:#727378">32</div>
<div class="code" style="top:1448px">                <span class="ty">Text</span>(<span class="pill">•••</span>)</div>
<div class="ln" style="top:1487.2px;color:#727378">41</div>
<div class="code" style="top:1486px">                    .<span class="fn">padding</span>()</div>
<div class="ln" style="top:1525.2px;color:#727378">42</div>
<div class="ln" style="top:1563.2px;color:#727378">43</div>
<div class="code" style="top:1562px">                <span class="ty">Spacer</span>()</div>
<div class="ln" style="top:1601.2px;color:#727378">44</div>
<div class="code" style="top:1600px">            }</div>
<div class="ln" style="top:1639.2px;color:#727378">45</div>
<div class="code" style="top:1638px">        }</div>
<div class="ln" style="top:1677.2px;color:#727378">46</div>
<div class="code" style="top:1676px">        .<span class="fn">navigationTitle</span>(<span class="st">"Lasagna"</span>)</div>
<div class="ln" style="top:1715.2px;color:#727378">47</div>
<div class="ln" style="top:1753.2px;color:#727378">48</div>
<div class="code" style="top:1752px">    }</div>
<div class="ln" style="top:1791.2px;color:#727378">49</div>
<div class="code" style="top:1790px">}</div>
<div class="r" style="left:2224px;top:214px;width:63px;height:52px;border-radius:11px;background:#3b3c3d;box-shadow:0 0 0 1px rgba(255,255,255,.12),0 1px 4px rgba(0,0,0,.35)"></div>
<svg class="abs" style="left:2244px;top:225px" width="24" height="32" viewBox="0 0 24 32" ><g fill="none" stroke="#e2e2e2" stroke-width="2.1" stroke-linecap="round" stroke-linejoin="round"><path d="M4.5 2H19.5M7.3 2.5L8.8 9.6Q3 12.2 2.4 20H21.6Q21 12.2 15.2 9.6L16.7 2.5"/><path d="M12 20.5V30"/></g></svg>
<div class="r" style="left:2307px;top:214px;width:213px;height:52px;border-radius:11px;background:#6d80a8;box-shadow:0 0 0 1px rgba(255,255,255,.12),0 1px 4px rgba(0,0,0,.35)"></div>
<svg class="abs" style="left:2324px;top:227px" width="25" height="26" viewBox="0 0 25 26" ><g fill="none" stroke="#eef0f5" stroke-width="2" stroke-linecap="round"><rect x="1.2" y="8.5" width="22.6" height="16" rx="3.2"/><path d="M4.5 5H20.5M7.5 1.6H17.5" stroke-width="1.7"/></g></svg>
<div class="t " style="left:2359.7px;top:229.3px;font-size:22.84px;font-weight:400;font-style:normal;color:#f6f7fa;-webkit-text-stroke:.75px currentColor;">Lasagna View</div>
<div class="r" style="left:2282px;top:604px;width:9px;height:49px;background:#2f2f31;border-radius:3px 0 0 3px"></div>
<div class="r" style="left:2282px;top:701px;width:9px;height:100px;background:#2f2f31;border-radius:3px 0 0 3px"></div>
<div class="r" style="left:2282px;top:829px;width:9px;height:98px;background:#2f2f31;border-radius:3px 0 0 3px"></div>
<div class="r" style="left:2933px;top:768px;width:8px;height:159px;background:#2f2f31;border-radius:0 3px 3px 0"></div>
<div class="r" style="left:2289.3px;top:344px;width:644.8px;height:1333.4px;border-radius:106px;background:#2b2b2c;box-shadow:inset 0 0 0 1.3px #77787a"></div>
<div class="r" style="left:2790px;top:345.5px;width:8.5px;height:8px;background:#232324"></div>
<div class="r" style="left:2424px;top:1669px;width:8.5px;height:7.5px;background:#232324"></div>
<div class="r" style="left:2298.3px;top:353.6px;width:627px;height:1315.4px;border-radius:97px;background:#000"></div>
<div class="r" id="screen" style="left:2318px;top:372px;width:589px;height:1278px;border-radius:80px;background:#fff;overflow:hidden">
<div class="r" style="left:201px;top:17px;width:187px;height:55px;border-radius:28px;background:#000"></div>
<svg class="abs" style="left:0;top:225px" width="590" height="393" viewBox="0 0 590 393"><defs>
<linearGradient id="wood" x1="0" y1="0" x2="1" y2="1"><stop offset="0" stop-color="#8a6c55"/><stop offset=".4" stop-color="#80684f"/><stop offset="1" stop-color="#4f3b2d"/></linearGradient>
<pattern id="ging" width="26" height="26" patternUnits="userSpaceOnUse" patternTransform="matrix(.92 -.38 .60 .58 0 0)"><rect width="26" height="26" fill="#f6e9e8"/><rect width="13" height="13" fill="#d21f2a"/><rect x="13" width="13" height="13" fill="#e9787e"/><rect y="13" width="13" height="13" fill="#e9787e"/></pattern>
<radialGradient id="plate" cx=".45" cy=".55" r=".62"><stop offset="0" stop-color="#9c4a36"/><stop offset=".65" stop-color="#8f3e2c"/><stop offset="1" stop-color="#813426"/></radialGradient>
<radialGradient id="tom" cx=".4" cy=".35" r=".7"><stop offset="0" stop-color="#e03a2c"/><stop offset="1" stop-color="#9d150f"/></radialGradient>
<linearGradient id="leaf" x1="0" y1="0" x2="1" y2="1"><stop offset="0" stop-color="#6cb554"/><stop offset="1" stop-color="#2d7a2e"/></linearGradient>
<filter id="b1" x="-20%" y="-20%" width="140%" height="140%"><feGaussianBlur stdDeviation="1.2"/></filter>
<filter id="b2" x="-20%" y="-20%" width="140%" height="140%"><feGaussianBlur stdDeviation="2"/></filter>
<filter id="b3" x="-20%" y="-20%" width="140%" height="140%"><feGaussianBlur stdDeviation="3"/></filter>
<filter id="b6" x="-30%" y="-30%" width="160%" height="160%"><feGaussianBlur stdDeviation="6"/></filter>
<filter id="woodTex" x="0" y="0" width="100%" height="100%" color-interpolation-filters="sRGB"><feTurbulence type="fractalNoise" baseFrequency=".004 .07" numOctaves="3" seed="5" result="n"/><feColorMatrix in="n" type="matrix" values="2.6 0 0 0 -.8  2.6 0 0 0 -.8  2.6 0 0 0 -.8  0 0 0 0 1" result="g"/><feComponentTransfer in="g" result="c"><feFuncR type="table" tableValues=".30 .46 .56 .64 .70"/><feFuncG type="table" tableValues=".22 .35 .44 .51 .57"/><feFuncB type="table" tableValues=".16 .26 .34 .40 .46"/></feComponentTransfer><feComposite in="c" in2="SourceGraphic" operator="in"/></filter>
<filter id="topTex" x="0" y="0" width="100%" height="100%" color-interpolation-filters="sRGB"><feTurbulence type="fractalNoise" baseFrequency=".05 .075" numOctaves="4" seed="11" result="n"/><feColorMatrix in="n" type="matrix" values="2.4 0 0 0 -.62  2.4 0 0 0 -.62  2.4 0 0 0 -.62  0 0 0 0 1" result="g"/><feComponentTransfer in="g" result="c"><feFuncR type="table" tableValues=".62 .80 .86 .90 .93"/><feFuncG type="table" tableValues=".24 .34 .42 .54 .72"/><feFuncB type="table" tableValues=".09 .11 .14 .24 .44"/></feComponentTransfer><feComposite in="c" in2="SourceGraphic" operator="in"/></filter>
<filter id="sideTex" x="0" y="0" width="100%" height="100%" color-interpolation-filters="sRGB"><feTurbulence type="fractalNoise" baseFrequency=".03 .14" numOctaves="4" seed="23" result="n"/><feColorMatrix in="n" type="matrix" values="2.8 0 0 0 -.9  2.8 0 0 0 -.9  2.8 0 0 0 -.9  0 0 0 0 1" result="g"/><feComponentTransfer in="g" result="c"><feFuncR type="table" tableValues=".50 .72 .86 .91 .94"/><feFuncG type="table" tableValues=".28 .40 .52 .68 .82"/><feFuncB type="table" tableValues=".13 .16 .22 .40 .58"/></feComponentTransfer><feComposite in="c" in2="SourceGraphic" operator="in"/></filter>
<filter id="grain" x="0" y="0" width="100%" height="100%"><feTurbulence type="fractalNoise" baseFrequency=".9" numOctaves="2" seed="3" result="n"/><feColorMatrix in="n" type="matrix" values="0 0 0 0 .2  0 0 0 0 .1  0 0 0 0 .05  0 0 0 -1.4 1.0" result="a"/><feComposite in="a" in2="SourceGraphic" operator="in"/></filter>
<clipPath id="pc"><rect width="590" height="393"/></clipPath>
</defs><g clip-path="url(#pc)"><rect width="590" height="393" fill="url(#wood)"/><g transform="rotate(-68 295 196)" opacity=".6"><rect x="-200" y="-200" width="1000" height="800" fill="#000" filter="url(#woodTex)"/></g><rect width="590" height="393" fill="url(#wood)" opacity=".35"/><g stroke="#33261d" stroke-width="2" opacity=".75" filter="url(#b1)"><path d="M62 0L-20 200"/><path d="M318 0L296 80"/><path d="M545 0L585 140"/><path d="M0 330L40 393"/><path d="M556 300L590 393"/></g><g filter="url(#b2)" opacity=".8"><ellipse cx="72" cy="98" rx="62" ry="20" fill="#a89b8c" opacity=".5"/><ellipse cx="72" cy="98" rx="62" ry="20" fill="none" stroke="#ddd6cd" stroke-width="4"/><ellipse cx="72" cy="88" rx="24" ry="9" fill="#d8d1c8"/><path d="M64 0L69 84L78 84L86 0Z" fill="#c9c0b6" opacity=".75"/><ellipse cx="258" cy="26" rx="52" ry="18" fill="#b3a698" opacity=".5"/><ellipse cx="258" cy="26" rx="52" ry="18" fill="none" stroke="#ddd6cd" stroke-width="4"/><ellipse cx="258" cy="14" rx="20" ry="12" fill="#ddd7cf"/></g><path d="M0.0,197.4L91.3,165.1L338.3,47.0L410.8,37.6L589.4,95.3L589.4,296.7L566.6,312.8L475.3,392.6L80.6,392.6L0.0,350.4Z" fill="url(#ging)"/><path d="M0.0,197.4L91.3,165.1L338.3,47.0L410.8,37.6L589.4,95.3L589.4,296.7L566.6,312.8L475.3,392.6L80.6,392.6L0.0,350.4Z" fill="#e2464d" opacity=".12"/><g stroke="#b81d25" stroke-width="2.2" opacity=".6" fill="none"><path d="M29.5,288.7L233.6,392.6"/><path d="M16.1,304.8L179.9,392.6"/></g><g filter="url(#b1)"><path d="M491.4,69.8L526.3,64.4L589.4,165.1L589.4,213.5Z" fill="#f0efef"/><path d="M577.3,283.3L589.4,277.9L589.4,353.1L580.0,350.4Z" fill="#7c7567"/><g stroke="#c3bcb2" stroke-width="2.2" fill="none"><path d="M448.4,71.2L467.2,114.1"/><path d="M460.5,68.5L479.3,111.4"/><path d="M472.6,67.1L491.4,108.8"/><path d="M484.7,65.8L503.5,127.6"/></g></g><g filter="url(#b1)"><ellipse cx="129.4" cy="16.9" rx="26.9" ry="16.6" fill="url(#tom)"/><circle cx="465.1" cy="41.6" r="29.5" fill="url(#tom)"/><ellipse cx="2.7" cy="161.1" rx="14.0" ry="25.5" fill="url(#tom)"/></g><g filter="url(#b1)"><ellipse cx="209.5" cy="72.5" rx="22.0" ry="14.8" fill="#c794a0"/><ellipse cx="214.8" cy="68.5" rx="10.7" ry="5.9" fill="#e3c3c9" opacity=".8"/><ellipse cx="67.1" cy="136.9" rx="30.1" ry="17.7" fill="#93586b"/><ellipse cx="72.5" cy="131.6" rx="16.1" ry="7.5" fill="#c296a1" opacity=".7"/><ellipse cx="282.0" cy="60.4" rx="20.1" ry="13.4" fill="#cfa6a8"/></g><g filter="url(#b1)"><ellipse cx="179.1" cy="49.7" rx="18.3" ry="11.3" fill="#3c9443"/><path d="M323.6,61.8Q362.5,33.6 410.8,45.6Q421.6,73.8 378.6,81.9Q338.3,79.2 323.6,61.8Z" fill="#4b9848"/><path d="M0.0,221.5Q26.9,205.4 47.8,235.0Q43.0,283.3 18.8,312.8Q2.7,294.0 0.0,286.0Z" fill="url(#leaf)"/></g><ellipse cx="326.3" cy="245.2" rx="264.5" ry="137.5" fill="#2e150e" opacity=".55" filter="url(#b3)"/><ellipse cx="326.3" cy="238.2" rx="264.5" ry="137.5" fill="#6f2a1f"/><ellipse cx="326.3" cy="231.2" rx="261.5" ry="129.5" fill="#b0604a"/><ellipse cx="326.3" cy="229.2" rx="256.5" ry="125.5" fill="url(#plate)"/><ellipse cx="330.3" cy="235.2" rx="208.5" ry="97.5" fill="#8b3b2a" filter="url(#b3)"/><ellipse cx="276.3" cy="283.2" rx="144.5" ry="52.5" fill="#a9563f" opacity=".35" filter="url(#b6)"/><path d="M179.9,243.0L343.7,326.3L486.0,235.0L394.7,181.3Z" fill="#3c170e" opacity=".6" filter="url(#b3)"/><g transform="skewY(21)"><path transform="skewY(-21)" d="M174.5,167.8L341.0,232.3L343.7,318.2L185.3,251.1Z" fill="#000" filter="url(#sideTex)"/></g><g transform="skewY(-21)"><path transform="skewY(21)" d="M341.0,232.3L479.3,178.6L475.3,229.6L343.7,318.2Z" fill="#000" filter="url(#sideTex)"/></g><path d="M341.0,232.3L479.3,178.6L475.3,229.6L343.7,318.2Z" fill="#3a1c0c" opacity=".22"/><path d="M183.9,235.0L342.4,291.4L475.3,216.2L475.3,229.6L343.7,318.2L185.3,251.1Z" fill="#3b200f" opacity=".45" filter="url(#b2)"/><g fill="none" stroke-linecap="round" filter="url(#b2)" opacity=".75"><path d="M179.9,208.1L338.3,251.1L475.3,189.3" stroke="#efd2a2" stroke-width="7"/><path d="M181.3,224.2L339.7,269.9L475.3,205.4" stroke="#8a5228" stroke-width="8"/><path d="M182.6,239.0L341.0,288.7L475.3,218.9" stroke="#f0d8ac" stroke-width="7"/><path d="M190.7,249.7L342.4,306.1L472.6,229.6" stroke="#7d4c28" stroke-width="6"/></g><path d="M170.5,165.1L185.3,132.9L290.0,81.9L327.6,85.9L479.3,143.7L478.0,181.3L338.3,235.0L177.2,200.1Z" fill="#000" filter="url(#topTex)"/><g filter="url(#b3)"><path d="M185.3,138.3L260.5,106.1L308.8,143.7L206.8,170.5Z" fill="#d25a22" opacity=".55"/><path d="M300.8,87.3L448.4,132.9L421.6,159.8L314.2,119.5Z" fill="#cf5a26" opacity=".55"/><path d="M220.2,186.6L341.0,167.8L405.5,197.4L338.3,226.9Z" fill="#f0d2a2" opacity=".55"/><path d="M271.2,132.9L341.0,143.7L327.6,159.8L287.3,154.4Z" fill="#c6c38a" opacity=".7"/></g><path d="M261.8,117.3Q300.8,100.7 346.4,119.5Q330.3,135.6 300.8,131.6Q273.9,127.6 261.8,117.3Z" fill="#4c9a3d"/><path d="M341.0,122.2Q351.8,106.1 366.5,104.7Q363.9,119.5 349.1,127.6Z" fill="#58a644"/><path d="M341.0,139.6Q365.2,114.1 410.8,143.7Q424.3,167.8 420.8,200.1Q367.9,181.3 341.0,139.6Z" fill="url(#leaf)"/><path d="M350.4,132.9L418.9,197.4" stroke="#9bd07e" stroke-width="1.2" opacity=".7"/><rect width="590" height="393" filter="url(#grain)" opacity=".15"/></g></svg>
</div>
<div class="t " style="left:2340.7px;top:531.5px;font-size:49.07px;font-weight:700;font-style:normal;color:#000;-webkit-text-stroke:0;">Lasagna</div>
<div class="t " style="left:2357.7px;top:1005.9px;font-size:18.44px;font-weight:700;font-style:normal;color:#000;-webkit-text-stroke:0;">A nicely presented serving of delicious, delicious lasagna.</div>
<div class="t " style="left:2357.7px;top:1026.0px;font-size:19.26px;font-weight:400;font-style:italic;color:#000;">Photo credit: Foodom</div>
<div class="t " style="left:2342.5px;top:1089.3px;font-size:25.45px;font-weight:400;font-style:normal;color:#000;">What else is there to say here? Lasagna is</div>
<div class="t " style="left:2342.5px;top:1122.2px;font-size:25.45px;font-weight:400;font-style:normal;color:#000;">obviously awesome.</div>
<div class="t " style="left:2342.5px;top:1188.1px;font-size:25.45px;font-weight:400;font-style:normal;color:#000;">I am half-Italian, so I suppose this is where my</div>
<div class="t " style="left:2342.5px;top:1221.1px;font-size:25.45px;font-weight:400;font-style:normal;color:#000;">love of lasagna comes from.</div>
<div class="t " style="left:2342.5px;top:1287.0px;font-size:25.45px;font-weight:400;font-style:normal;color:#000;">Good homemade lasagna must have the</div>
<div class="t " style="left:2342.5px;top:1319.9px;font-size:25.45px;font-weight:400;font-style:normal;color:#000;">appropriate balance of meat, cheese, and</div>
<div class="t " style="left:2342.5px;top:1352.9px;font-size:25.45px;font-weight:400;font-style:normal;color:#000;">vegetables. The cheese is important: no</div>
<div class="t " style="left:2342.5px;top:1385.8px;font-size:25.45px;font-weight:400;font-style:normal;color:#000;">cheddar! Provolone, mozzarella, and ricotta</div>
<div class="t " style="left:2342.5px;top:1418.8px;font-size:25.45px;font-weight:400;font-style:normal;color:#000;">only.</div>
<div class="t " style="left:2342.5px;top:1517.6px;font-size:25.45px;font-weight:400;font-style:normal;color:#000;">go to.</div>
<div class="t" style="left:2342.5px;top:1484.7px;font-size:25.45px;color:#000">If you like lasagna, <span style="color:#2f7cf6">try this recipe</span> – it's my</div>
<svg class="abs" style="left:2584px;top:1119px" width="20" height="31" viewBox="0 0 20 31" ><g fill="#9aa3ad"><path d="M3 1V9Q3 12 5.2 12.6V29Q5.2 30.5 6.5 30.5Q7.8 30.5 7.8 29V12.6Q10 12 10 9V1H8.6V8.5H7.2V1H5.8V8.5H4.4V1Z"/><path d="M13 1Q17.5 3 17.5 12V16H15.8V29Q15.8 30.5 14.4 30.5Q13 30.5 13 29Z" fill="#b9c0c8"/></g></svg>
<svg class="abs" style="left:2614px;top:1120px" width="31" height="31" viewBox="0 0 31 31" ><defs><radialGradient id="yg" cx=".5" cy=".35" r=".75"><stop offset="0" stop-color="#ffdf5a"/><stop offset="1" stop-color="#f4a51c"/></radialGradient></defs><circle cx="15" cy="15.5" r="14.5" fill="url(#yg)"/><path d="M6.5 12.5Q9 9.5 11.5 12.5M18.5 12.5Q21 9.5 23.5 12.5" fill="none" stroke="#6b3f12" stroke-width="1.8" stroke-linecap="round"/><path d="M6.5 17.5Q15 27 23.8 17.5" fill="none" stroke="#6b3f12" stroke-width="1.8" stroke-linecap="round"/><ellipse cx="24.5" cy="20.5" rx="4" ry="3.3" fill="#ef5d86" transform="rotate(-35 24.5 20.5)"/></svg>
<div class="r" style="left:2224px;top:1756px;width:160px;height:52px;background:#3b3c3d;border-radius:12px;box-shadow:0 0 0 1px rgba(255,255,255,.1),0 1px 4px rgba(0,0,0,.3)"></div>
<div class="r" style="left:2404px;top:1756px;width:64px;height:52px;background:#3b3c3d;border-radius:12px;box-shadow:0 0 0 1px rgba(255,255,255,.1),0 1px 4px rgba(0,0,0,.3)"></div>
<div class="r" style="left:2489px;top:1756px;width:63px;height:52px;background:#3b3c3d;border-radius:12px;box-shadow:0 0 0 1px rgba(255,255,255,.1),0 1px 4px rgba(0,0,0,.3)"></div>
<div class="r" style="left:2792px;top:1756px;width:207px;height:52px;background:#3b3c3d;border-radius:12px;box-shadow:0 0 0 1px rgba(255,255,255,.1),0 1px 4px rgba(0,0,0,.3)"></div>
<svg class="abs" style="left:2242px;top:1770px" width="27" height="27" viewBox="0 0 27 27" ><circle cx="13.5" cy="13.5" r="13.2" fill="#2f73f6"/><path d="M10 7.6L19.6 13.5L10 19.4Z" fill="#16203a"/></svg>
<svg class="abs" style="left:2289px;top:1770px" width="26" height="26" viewBox="0 0 26 26" ><rect x="1.2" y="1.2" width="23.6" height="23.6" rx="3" fill="none" stroke="#dcdcdd" stroke-width="2"/><path d="M9 6L18.5 14.5L14 15L16.6 20.6L14.6 21.5L12 16L9 19Z" fill="#dcdcdd"/></svg>
<svg class="abs" style="left:2335px;top:1770px" width="31" height="27" viewBox="0 0 31 27" ><rect x="1" y="1" width="7" height="10.5" rx="1.4" fill="none" stroke="#dcdcdd" stroke-width="1.9"/><rect x="1" y="15" width="7" height="10.5" rx="1.4" fill="none" stroke="#dcdcdd" stroke-width="1.9"/><rect x="12" y="1" width="7" height="10.5" rx="1.4" fill="none" stroke="#dcdcdd" stroke-width="1.9"/><rect x="12" y="15" width="7" height="10.5" rx="1.4" fill="none" stroke="#dcdcdd" stroke-width="1.9"/><rect x="23" y="1" width="7" height="10.5" rx="1.4" fill="none" stroke="#dcdcdd" stroke-width="1.9"/><rect x="23" y="15" width="7" height="10.5" rx="1.4" fill="none" stroke="#dcdcdd" stroke-width="1.9"/></svg>
<svg class="abs" style="left:2422px;top:1770px" width="28" height="27" viewBox="0 0 28 27" ><rect x="1.2" y="1.2" width="25.6" height="10.6" rx="5.3" fill="none" stroke="#dcdcdd" stroke-width="2"/><circle cx="7" cy="6.5" r="2.8" fill="#dcdcdd"/><rect x="0.5" y="15" width="27" height="11.5" rx="5.75" fill="#dcdcdd"/><circle cx="21" cy="20.75" r="3.2" fill="#3b3c3d"/></svg>
<svg class="abs" style="left:2506px;top:1769px" width="28" height="28" viewBox="0 0 28 28" ><g fill="none" stroke="#b4b4b6" stroke-width="1.9"><circle cx="14" cy="14" r="12.6"/><rect x="9.5" y="6" width="9" height="16" rx="2"/></g></svg>
<svg class="abs" style="left:2810px;top:1769px" width="28" height="28" viewBox="0 0 28 28" ><g fill="none" stroke="#dcdcdd" stroke-linecap="round"><circle cx="11" cy="11" r="9" stroke-width="2.2"/><path d="M17.8 17.8L25.5 25.5" stroke-width="3.2"/><path d="M7 11H15" stroke-width="2"/></g></svg>
<svg class="abs" style="left:2858px;top:1769px" width="28" height="28" viewBox="0 0 28 28" ><g fill="none" stroke="#dcdcdd" stroke-linecap="round"><circle cx="11" cy="11" r="9" stroke-width="2.2"/><path d="M17.8 17.8L25.5 25.5" stroke-width="3.2"/><path d="M9.6 8.6L11.6 7V15" stroke-width="1.8"/></g></svg>
<svg class="abs" style="left:2906px;top:1769px" width="28" height="28" viewBox="0 0 28 28" ><g fill="none" stroke="#dcdcdd" stroke-linecap="round"><circle cx="11" cy="11" r="9" stroke-width="2.2"/><path d="M17.8 17.8L25.5 25.5" stroke-width="3.2"/><rect x="7.6" y="7.6" width="6.8" height="6.8" rx="1" stroke-width="1.8"/></g></svg>
<svg class="abs" style="left:2954px;top:1769px" width="28" height="28" viewBox="0 0 28 28" ><g fill="none" stroke="#dcdcdd" stroke-linecap="round"><circle cx="11" cy="11" r="9" stroke-width="2.2"/><path d="M17.8 17.8L25.5 25.5" stroke-width="3.2"/><path d="M7 11H15M11 7V15" stroke-width="2"/></g></svg>
<svg class="abs" style="left:569px;top:1852px" width="30" height="18" viewBox="0 0 30 18" ><path d="M3.5 0H21.5Q23.2 0 24.2 1.3L29.2 8Q29.8 9 29.2 10L24.2 16.7Q23.2 18 21.5 18H3.5Q0 18 0 14.5V3.5Q0 0 3.5 0Z" fill="#3478f6"/></svg>
<div class="r" style="left:614px;top:1849px;width:2px;height:24px;background:#3f4044"></div>
<svg class="abs" style="left:636px;top:1847px" width="21" height="27" viewBox="0 0 21 27" ><g fill="none" stroke="#b4b4b7" stroke-width="1.8"><rect x="1" y="1" width="5.6" height="25" rx="1.2"/><rect x="14.4" y="1" width="5.6" height="25" rx="1.2"/></g></svg>
<svg class="abs" style="left:692px;top:1849px" width="28" height="25" viewBox="0 0 28 25" ><g fill="none" stroke="#5c5d61" stroke-width="2" stroke-linejoin="round" stroke-linecap="round"><path d="M2 14L14 2.5L26 14H21"/><rect x="6.5" y="18.5" width="15" height="5"/></g></svg>
<svg class="abs" style="left:755px;top:1848px" width="22" height="27" viewBox="0 0 22 27" ><g fill="none" stroke="#5c5d61" stroke-width="2" stroke-linejoin="round" stroke-linecap="round"><path d="M11 1.5V16M4.5 10L11 16.5L17.5 10"/><rect x="2.5" y="20.5" width="17" height="5"/></g></svg>
<svg class="abs" style="left:815px;top:1848px" width="22" height="27" viewBox="0 0 22 27" ><g fill="none" stroke="#5c5d61" stroke-width="2" stroke-linejoin="round" stroke-linecap="round"><path d="M11 16.5V2M4.5 8L11 1.5L17.5 8"/><rect x="2.5" y="20.5" width="17" height="5"/></g></svg>
<div class="r" style="left:856px;top:1849px;width:2px;height:24px;background:#3f4044"></div>
<svg class="abs" style="left:876px;top:1847px" width="24" height="28" viewBox="0 0 24 28" ><g fill="none" stroke="#b4b4b7" stroke-width="1.8" stroke-linejoin="round"><path d="M9 7.5L21.5 2.5V21L9 26.5Z"/><path d="M9 7.5L5.5 5.5V23L9 26.5" /><path d="M5.5 6.5L2 4.5V20.5L5.5 23"/><path d="M5.5 5.5L17 1.2L21.5 2.5M2 4.5L12 1"/></g></svg>
<svg class="abs" style="left:934px;top:1847px" width="28" height="28" viewBox="0 0 28 28" ><g fill="none" stroke="#b4b4b7" stroke-width="1.9"><circle cx="5.5" cy="5" r="3.6"/><circle cx="5.5" cy="23" r="3.6"/><circle cx="22.5" cy="14" r="3.6"/><path d="M8.8 6.6L19.2 12.4M8.8 21.4L19.2 15.6"/></g></svg>
<svg class="abs" style="left:996px;top:1847px" width="25" height="28" viewBox="0 0 25 28" ><g fill="none" stroke="#b4b4b7" stroke-width="1.9"><rect x="1.2" y="1.2" width="22.6" height="11" rx="5.5"/><rect x="1.2" y="15.8" width="22.6" height="11" rx="5.5"/><circle cx="7" cy="6.7" r="2.6"/><circle cx="18" cy="21.3" r="2.6"/></g></svg>
<svg class="abs" style="left:1054px;top:1847px" width="29" height="29" viewBox="0 0 29 29" ><path d="M27 2L2.5 12.6H14.6V26.5Z" fill="none" stroke="#b4b4b7" stroke-width="1.9" stroke-linejoin="round"/></svg>
<div class="r" style="left:1099px;top:1849px;width:2px;height:24px;background:#3f4044"></div>
<svg class="abs" style="left:1118px;top:1849px" width="23" height="23" viewBox="0 0 30 30" ><rect x="0.5" y="0.5" width="29" height="29" rx="6.5" fill="#9a9a9c"/><g stroke="#2f3032" stroke-width="2.2" stroke-linecap="round" fill="none"><path d="M15.8 8.2L9.2 20.6"/><path d="M13.6 8.2L21.2 21.6"/><path d="M6.8 18.2H18.6"/><path d="M20.6 18.2H23.4"/></g></svg>
<div class="t " style="left:1154.0px;top:1849.2px;font-size:23.01px;font-weight:400;font-style:normal;color:#e2e2e3;">FavouriteThings</div>
<div class="t " style="left:2760.0px;top:1849.6px;font-size:22.95px;font-weight:700;font-style:normal;color:#9e9ea2;white-space:pre;-webkit-text-stroke:0;">Line: 51  Col: 30</div>
<div class="r" style="left:2954px;top:1849px;width:2px;height:24px;background:#3f4044"></div>
<svg class="abs" style="left:2973px;top:1848px" width="27" height="27" viewBox="0 0 27 27" ><rect x="1.2" y="1.2" width="24.6" height="24.6" rx="4.5" fill="none" stroke="#a4a4a8" stroke-width="2"/><rect x="4.8" y="16" width="17.4" height="6.2" rx="2" fill="#a4a4a8"/></svg>
</div>
<div id="frame"></div>
</body></html>
